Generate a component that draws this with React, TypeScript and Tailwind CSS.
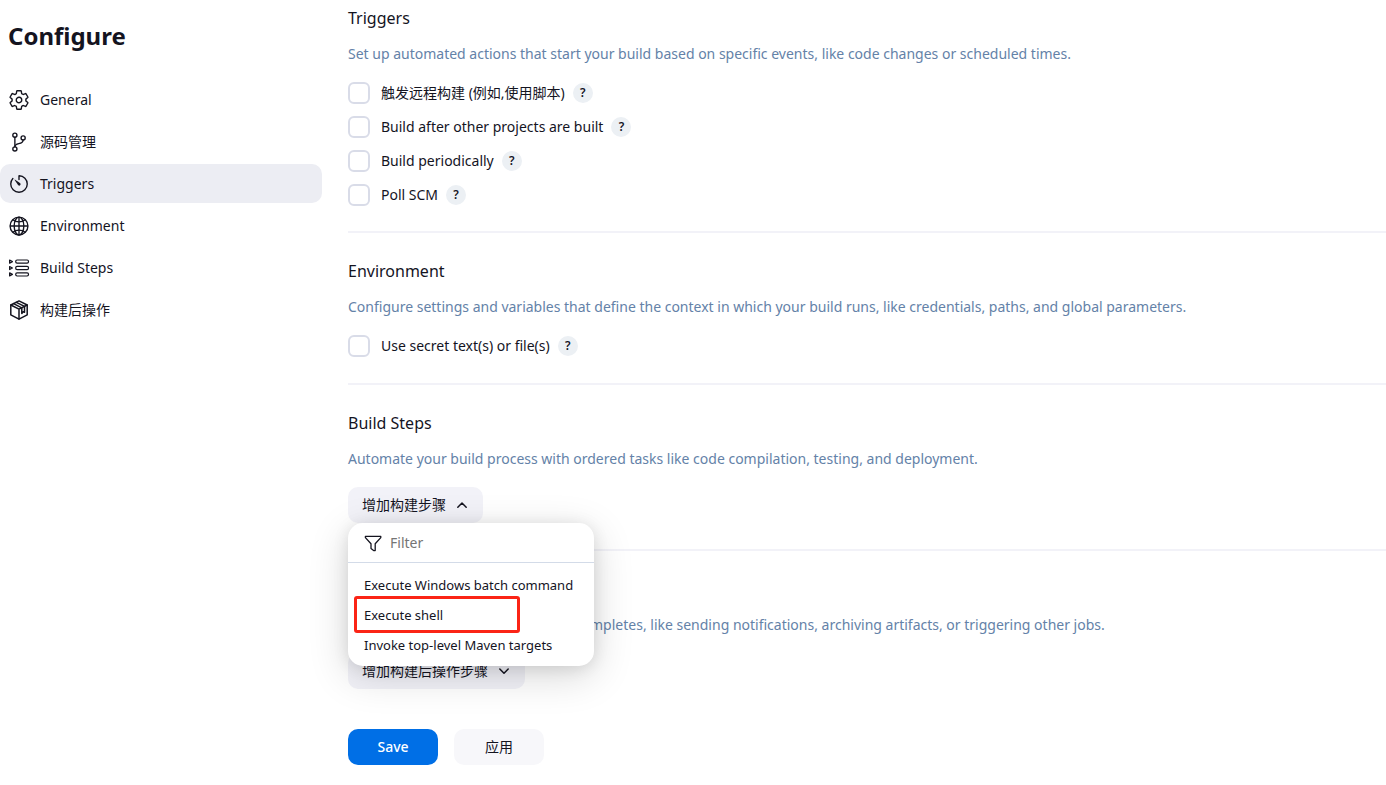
import React, { useState } from "react";
import { IoGitBranchOutline, IoGlobeOutline, IoSettingsOutline, IoTimerOutline } from "react-icons/io5";

function StepsIcon() {
  return (
    <svg viewBox="1 1 22 22" className="size-[22px]" fill="none" stroke="currentColor" strokeWidth="1.2" strokeLinejoin="round">
      {[5.6, 12, 18.4].map((y) => (
        <g key={y}>
          <path d={`M2.6 ${y - 1.5} L5.4 ${y} L2.6 ${y + 1.5} Z`} />
          <rect x="8.7" y={y - 1.6} width="12.8" height="3.2" rx="1.4" />
        </g>
      ))}
    </svg>
  );
}

function PackageIcon() {
  return (
    <svg viewBox="1 1 22 22" className="size-[22px]" fill="none" stroke="currentColor" strokeWidth="1.5" strokeLinejoin="round" strokeLinecap="round">
      <path d="M12 2.9 L20.2 7 V16.8 L12 21.2 L3.8 16.8 V7 Z" />
      <path d="M3.8 7 L12 11.2 L20.2 7 M12 11.2 V21" />
      <path d="M6.6 5.6 L14.8 9.8 V15.6 L16.2 13.8 L17.5 14.2 V8.4 L9.3 4.3" />
    </svg>
  );
}

function FunnelIcon() {
  return (
    <svg viewBox="0 0 18 18" className="size-[18px] shrink-0" fill="none" stroke="currentColor" strokeWidth="1.3" strokeLinejoin="round">
      <path d="M1.4 2.4 H16.8 V3.6 L11.2 9.8 V16.6 H9.6 L7 14.6 V9.8 L1.4 3.6 Z" />
    </svg>
  );
}

function Chevron({ up = false }: { up?: boolean }) {
  return (
    <svg viewBox="0 0 12 12" className="size-3" fill="none" stroke="currentColor" strokeWidth="1.5" strokeLinecap="round" strokeLinejoin="round">
      <path d={up ? "M1.8 8.2 L6 4 L10.2 8.2" : "M1.8 4 L6 8.2 L10.2 4"} />
    </svg>
  );
}

const navItems = [
  { label: "General", icon: <IoSettingsOutline className="size-[22px]" /> },
  { label: "源码管理", icon: <IoGitBranchOutline className="size-[22px]" /> },
  { label: "Triggers", icon: <IoTimerOutline className="size-[22px]" />, active: true },
  { label: "Environment", icon: <IoGlobeOutline className="size-[22px]" /> },
  { label: "Build Steps", icon: <StepsIcon /> },
  { label: "构建后操作", icon: <PackageIcon /> },
];

function Option({ id, label }: { id: string; label: string }) {
  return (
    <div className="flex h-[22px] items-center">
      <input
        id={id}
        type="checkbox"
        className="size-[22px] shrink-0 appearance-none rounded-md border-2 border-[#d9dce8] bg-white checked:bg-[#006fe6]"
      />
      <label htmlFor={id} className="pl-[11px]">
        {label}
      </label>
      <button
        type="button"
        aria-label={`Help for ${label}`}
        className="ml-2 flex size-5 items-center justify-center rounded-full bg-[#ecf0f4] text-xs font-semibold"
      >
        ?
      </button>
    </div>
  );
}

function Section({ title, text, children }: { title: string; text: string; children: React.ReactNode }) {
  return (
    <section className="border-b-2 border-[#f2f2f8] py-[26px] first:pt-0 first:pb-[25px] last:border-b-0 last:pb-0">
      <h2 className="text-base leading-6">{title}</h2>
      <p className="mt-3.5 leading-5 text-[#6482a8]">{text}</p>
      <div className="mt-[18px]">{children}</div>
    </section>
  );
}

function StepMenu() {
  return (
    <div className="absolute top-full left-0 z-10 w-[246px] rounded-[15px] bg-white shadow-[0_10px_40px_rgba(0,0,0,0.16),0_2px_16px_rgba(0,0,0,0.1)]">
      <label className="flex h-10 items-center gap-2 border-b border-[#d3dbe8] pl-4">
        <FunnelIcon />
        <input
          type="text"
          aria-label="Filter"
          placeholder="Filter"
          className="w-full min-w-0 bg-transparent pr-4 outline-none placeholder:text-[#757575]"
        />
      </label>
      <ul className="pt-[7px] pb-1.5 text-[13px]">
        <li>
          <button type="button" className="h-[30px] w-full pl-4 text-left whitespace-nowrap">Execute Windows batch command</button>
        </li>
        <li className="relative">
          <button type="button" className="h-[30px] w-full pl-4 text-left">Execute shell</button>
          <span className="pointer-events-none absolute -top-1 -bottom-[3px] left-1.5 w-[166px] rounded-[3px] border-3 border-[#fb2416]" />
        </li>
        <li>
          <button type="button" className="h-[30px] w-full pl-4 text-left whitespace-nowrap">Invoke top-level Maven targets</button>
        </li>
      </ul>
    </div>
  );
}

export default function App() {
  const [open, setOpen] = useState(true);

  return (
    <div className="flex min-h-screen bg-white font-['Noto_Sans','Noto_Sans_CJK_SC',sans-serif] text-sm text-[#14141f]">
      <aside className="w-[322px] shrink-0">
        <h1 className="pt-5 pl-2 text-2xl leading-8 font-bold">Configure</h1>
        <nav className="mt-7 flex flex-col gap-[3px]">
          {navItems.map((item) => (
            <a
              key={item.label}
              href="#"
              className={
                item.active
                  ? "flex h-[39px] items-center gap-2.5 rounded-[10px] bg-[#ecedf3] pl-2"
                  : "flex h-[39px] items-center gap-2.5 rounded-[10px] pl-2"
              }
            >
              {item.icon}
              {item.label}
            </a>
          ))}
        </nav>
      </aside>

      <main className="ml-[26px] min-w-0 flex-1 pt-1.5 pb-5">
        <div>
          <Section
            title="Triggers"
            text="Set up automated actions that start your build based on specific events, like code changes or scheduled times."
          >
            <div className="flex flex-col gap-3">
              <Option id="remote" label="触发远程构建 (例如,使用脚本)" />
              <Option id="after" label="Build after other projects are built" />
              <Option id="periodic" label="Build periodically" />
              <Option id="poll" label="Poll SCM" />
            </div>
          </Section>

          <Section
            title="Environment"
            text="Configure settings and variables that define the context in which your build runs, like credentials, paths, and global parameters."
          >
            <Option id="secret" label="Use secret text(s) or file(s)" />
          </Section>

          <Section
            title="Build Steps"
            text="Automate your build process with ordered tasks like code compilation, testing, and deployment."
          >
            <div className="relative w-fit">
              <button
                type="button"
                aria-expanded={open}
                onClick={() => setOpen(!open)}
                className="flex h-9 items-center gap-2.5 rounded-[10px] bg-[#f2f2f8] pr-[15px] pl-3.5"
              >
                增加构建步骤
                <Chevron up={open} />
              </button>
              {open && <StepMenu />}
            </div>
          </Section>

          <Section
            title="构建后操作"
            text="Define what happens after a build completes, like sending notifications, archiving artifacts, or triggering other jobs."
          >
            <button type="button" className="flex h-9 items-center gap-2.5 rounded-[10px] bg-[#f2f2f8] pr-[15px] pl-3.5">
              增加构建后操作步骤
              <Chevron />
            </button>
          </Section>
        </div>

        <div className="mt-10 flex gap-4">
          <button type="button" className="h-9 w-[90px] rounded-[10px] bg-[#006fe6] font-medium text-white">Save</button>
          <button type="button" className="h-9 w-[90px] rounded-[10px] bg-[#f7f7fa]">应用</button>
        </div>
      </main>
    </div>
  );
}
